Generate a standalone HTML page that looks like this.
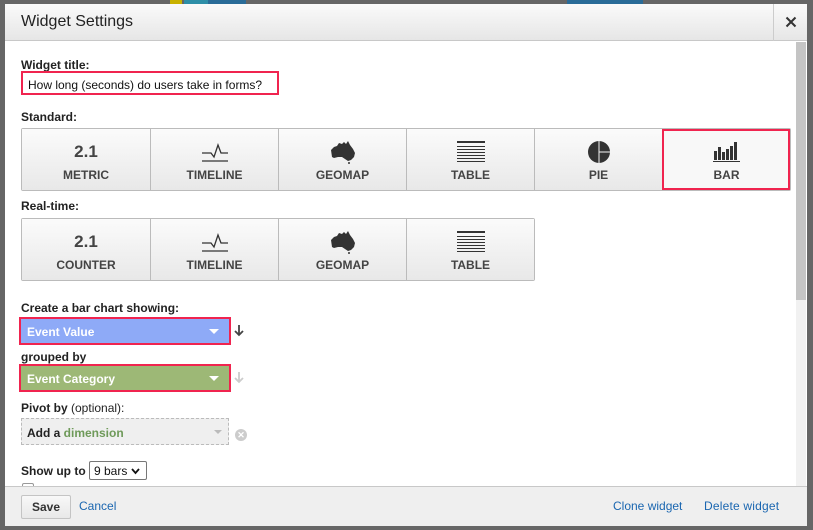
<!DOCTYPE html>
<html><head><meta charset="utf-8"><style>
*{box-sizing:border-box;margin:0;padding:0}
body{width:813px;height:530px;overflow:hidden;background:#666;font-family:"Liberation Sans",Arial,sans-serif;position:relative}
.dlg{position:absolute;left:5px;top:4px;width:802px;height:522px;background:#fff;overflow:hidden}
.hdr{position:absolute;left:0;top:0;width:802px;height:37px;background:linear-gradient(#fafafa,#e6e6e6);border-bottom:1px solid #c8c8c8}
.hdr .t{position:absolute;left:16px;top:9px;font-size:16px;color:#222}
.hdr .x{position:absolute;left:768px;top:0;width:34px;height:37px;border-left:1px solid #ccc;text-align:center;line-height:36px}
.lbl{position:absolute;left:16px;font-size:12px;font-weight:bold;color:#222}
.in{position:absolute;left:16px;top:67px;width:258px;height:24px;border:1px solid #bbb;font-size:12px;padding:6px 0 0 6px;color:#111;outline:2px solid #f0244f;outline-offset:-2px}
.row{position:absolute;left:16px;display:flex;border:1px solid #bbb;border-radius:2px}
.b{width:128px;height:61px;background:linear-gradient(#fbfbfb,#e8e8e8);border-left:1px solid #bbb;position:relative;text-align:center}
.b:first-child{border-left:none}
.b .n{position:absolute;left:0;right:0;top:39px;font-size:12px;font-weight:bold;color:#444}
.b .i{position:absolute;left:0;right:0;top:12px;height:22px;display:flex;justify-content:center;align-items:center;font-weight:bold;font-size:17px;color:#444}
.sel{outline:2px solid #f0244f;outline-offset:-2px;background:#f8f8f8}
.dd{position:absolute;left:16px;width:208px;height:24px;font-size:12px;font-weight:bold;color:#fff;padding:6px 0 0 6px;outline:2px solid #f0244f}
.dd:after{content:"";position:absolute;right:10px;top:10px;border:5px solid transparent;border-top:5px solid #fff;border-bottom:none}
.ar{position:absolute}
.ftr{position:absolute;left:0;top:482px;width:802px;height:40px;background:#efefef;border-top:1px solid #c8c8c8}
a{color:#1a66b0;text-decoration:none;font-size:12px;position:absolute;top:12px}
.sb{position:absolute;left:791px;top:38px;width:10px;height:444px;background:#f1f1f1}
.sb div{width:10px;height:258px;background:#c4c4c4}
</style></head><body>
<div style="position:absolute;left:170px;top:0;width:12px;height:4px;background:#c9b200"></div>
<div style="position:absolute;left:184px;top:0;width:24px;height:4px;background:#2e8fa8"></div>
<div style="position:absolute;left:208px;top:0;width:38px;height:4px;background:#2a6c98"></div>
<div style="position:absolute;left:567px;top:0;width:76px;height:4px;background:#2a6c98"></div>
<div class="dlg">
<div class="hdr"><div class="t">Widget Settings</div><div class="x"><svg width="12" height="12" style="margin-top:12px"><path d="M1.5 1.5l9 9M10.5 1.5l-9 9" stroke="#333" stroke-width="2"/></svg></div></div>
<div class="sb"><div></div></div>
<div class="lbl" style="top:54px">Widget title:</div>
<div class="in">How long (seconds) do users take in forms?</div>
<div class="lbl" style="top:106px">Standard:</div>
<div class="row" style="top:124px">
<div class="b"><div class="i">2.1</div><div class="n">METRIC</div></div>
<div class="b"><div class="i"><svg width="28" height="22"><path d="M1 12h9l3 4 4-12 3 8h7" fill="none" stroke="#333" stroke-width="1.3"/><path d="M1 20h26" stroke="#333" stroke-width="1.3"/></svg></div><div class="n">TIMELINE</div></div>
<div class="b"><div class="i"><svg width="28" height="24"><path d="M2 10L5 7L8 6L10 3L13 4L15 2L17 4L19 1L21 5L24 9L26 13L25 17L22 20L19 21L16 19L13 17L9 17L5 18L3 17Z" fill="#333"/><circle cx="20" cy="23" r="1" fill="#333"/></svg></div><div class="n">GEOMAP</div></div>
<div class="b"><div class="i"><svg width="28" height="22"><g fill="#333"><rect x="0" y="0" width="28" height="2"/><rect x="0" y="5" width="28" height="1"/><rect x="0" y="8" width="28" height="1"/><rect x="0" y="11" width="28" height="1"/><rect x="0" y="14" width="28" height="1"/><rect x="0" y="17" width="28" height="1"/><rect x="0" y="20" width="28" height="1"/></g></svg></div><div class="n">TABLE</div></div>
<div class="b"><div class="i"><svg width="24" height="24"><circle cx="12" cy="12" r="11" fill="#333"/><path d="M12 1v22M12 12h11" stroke="#f4f4f4" stroke-width="1"/></svg></div><div class="n">PIE</div></div>
<div class="b sel"><div class="i"><svg width="28" height="22"><g fill="#333"><rect x="1" y="10" width="3" height="9"/><rect x="5" y="6" width="3" height="13"/><rect x="9" y="11" width="3" height="8"/><rect x="13" y="8" width="3" height="11"/><rect x="17" y="5" width="3" height="14"/><rect x="21" y="1" width="3" height="18"/><rect x="0" y="20" width="27" height="1"/></g></svg></div><div class="n">BAR</div></div>
</div>
<div class="lbl" style="top:195px">Real-time:</div>
<div class="row" style="top:214px">
<div class="b"><div class="i">2.1</div><div class="n">COUNTER</div></div>
<div class="b"><div class="i"><svg width="28" height="22"><path d="M1 12h9l3 4 4-12 3 8h7" fill="none" stroke="#333" stroke-width="1.3"/><path d="M1 20h26" stroke="#333" stroke-width="1.3"/></svg></div><div class="n">TIMELINE</div></div>
<div class="b"><div class="i"><svg width="28" height="24"><path d="M2 10L5 7L8 6L10 3L13 4L15 2L17 4L19 1L21 5L24 9L26 13L25 17L22 20L19 21L16 19L13 17L9 17L5 18L3 17Z" fill="#333"/><circle cx="20" cy="23" r="1" fill="#333"/></svg></div><div class="n">GEOMAP</div></div>
<div class="b"><div class="i"><svg width="28" height="22"><g fill="#333"><rect x="0" y="0" width="28" height="2"/><rect x="0" y="5" width="28" height="1"/><rect x="0" y="8" width="28" height="1"/><rect x="0" y="11" width="28" height="1"/><rect x="0" y="14" width="28" height="1"/><rect x="0" y="17" width="28" height="1"/><rect x="0" y="20" width="28" height="1"/></g></svg></div><div class="n">TABLE</div></div>
</div>
<div class="lbl" style="top:297px">Create a bar chart showing:</div>
<div class="dd" style="top:315px;background:#8eaaf7">Event Value</div>
<svg class="ar" style="left:229px;top:320px" width="10" height="13"><path d="M5 1v10M1 7l4 4 4-4" fill="none" stroke="#444" stroke-width="1.8"/></svg>
<div class="lbl" style="top:346px">grouped by</div>
<div class="dd" style="top:362px;background:#9db876">Event Category</div>
<svg class="ar" style="left:229px;top:367px" width="10" height="13"><path d="M5 1v10M1 7l4 4 4-4" fill="none" stroke="#ccc" stroke-width="1.8"/></svg>
<div class="lbl" style="top:397px">Pivot by <span style="font-weight:normal">(optional):</span></div>
<div style="position:absolute;left:16px;top:414px;width:208px;height:27px;border:1px dashed #bbb;background:#efefef;font-size:12px;font-weight:bold;padding:7px 0 0 5px;color:#222">Add a <span style="color:#6f9a5a">dimension</span><span style="position:absolute;right:6px;top:11px;border:4px solid transparent;border-top:4px solid #bbb;border-bottom:none"></span></div>
<div style="position:absolute;left:230px;top:425px;width:12px;height:12px;border-radius:50%;background:#ccc;color:#fff;font-size:9px;text-align:center;line-height:12px;font-weight:bold">✕</div>
<div class="lbl" style="top:460px">Show up to</div>
<div style="position:absolute;left:84px;top:457px;width:58px;height:19px;border:1px solid #777;border-radius:2px;font-size:12px;padding:2px 0 0 4px;color:#111">9 bars <svg width="9" height="7"><path d="M1 1l3.5 4L8 1" fill="none" stroke="#111" stroke-width="1.8"/></svg></div>
<div style="position:absolute;left:17px;top:479px;width:12px;height:6px;border:1px solid #999;border-bottom:none;border-radius:2px 2px 0 0"></div>
<div class="ftr">
<div style="position:absolute;left:16px;top:8px;width:50px;height:24px;border:1px solid #c4c4c4;border-radius:2px;background:linear-gradient(#f8f8f8,#e8e8e8);font-size:12px;font-weight:bold;text-align:center;line-height:22px;color:#333">Save</div>
<a style="left:74px">Cancel</a>
<a style="left:608px">Clone widget</a>
<a style="left:699px;letter-spacing:0.2px">Delete widget</a>
</div>
</div>
</body></html>
